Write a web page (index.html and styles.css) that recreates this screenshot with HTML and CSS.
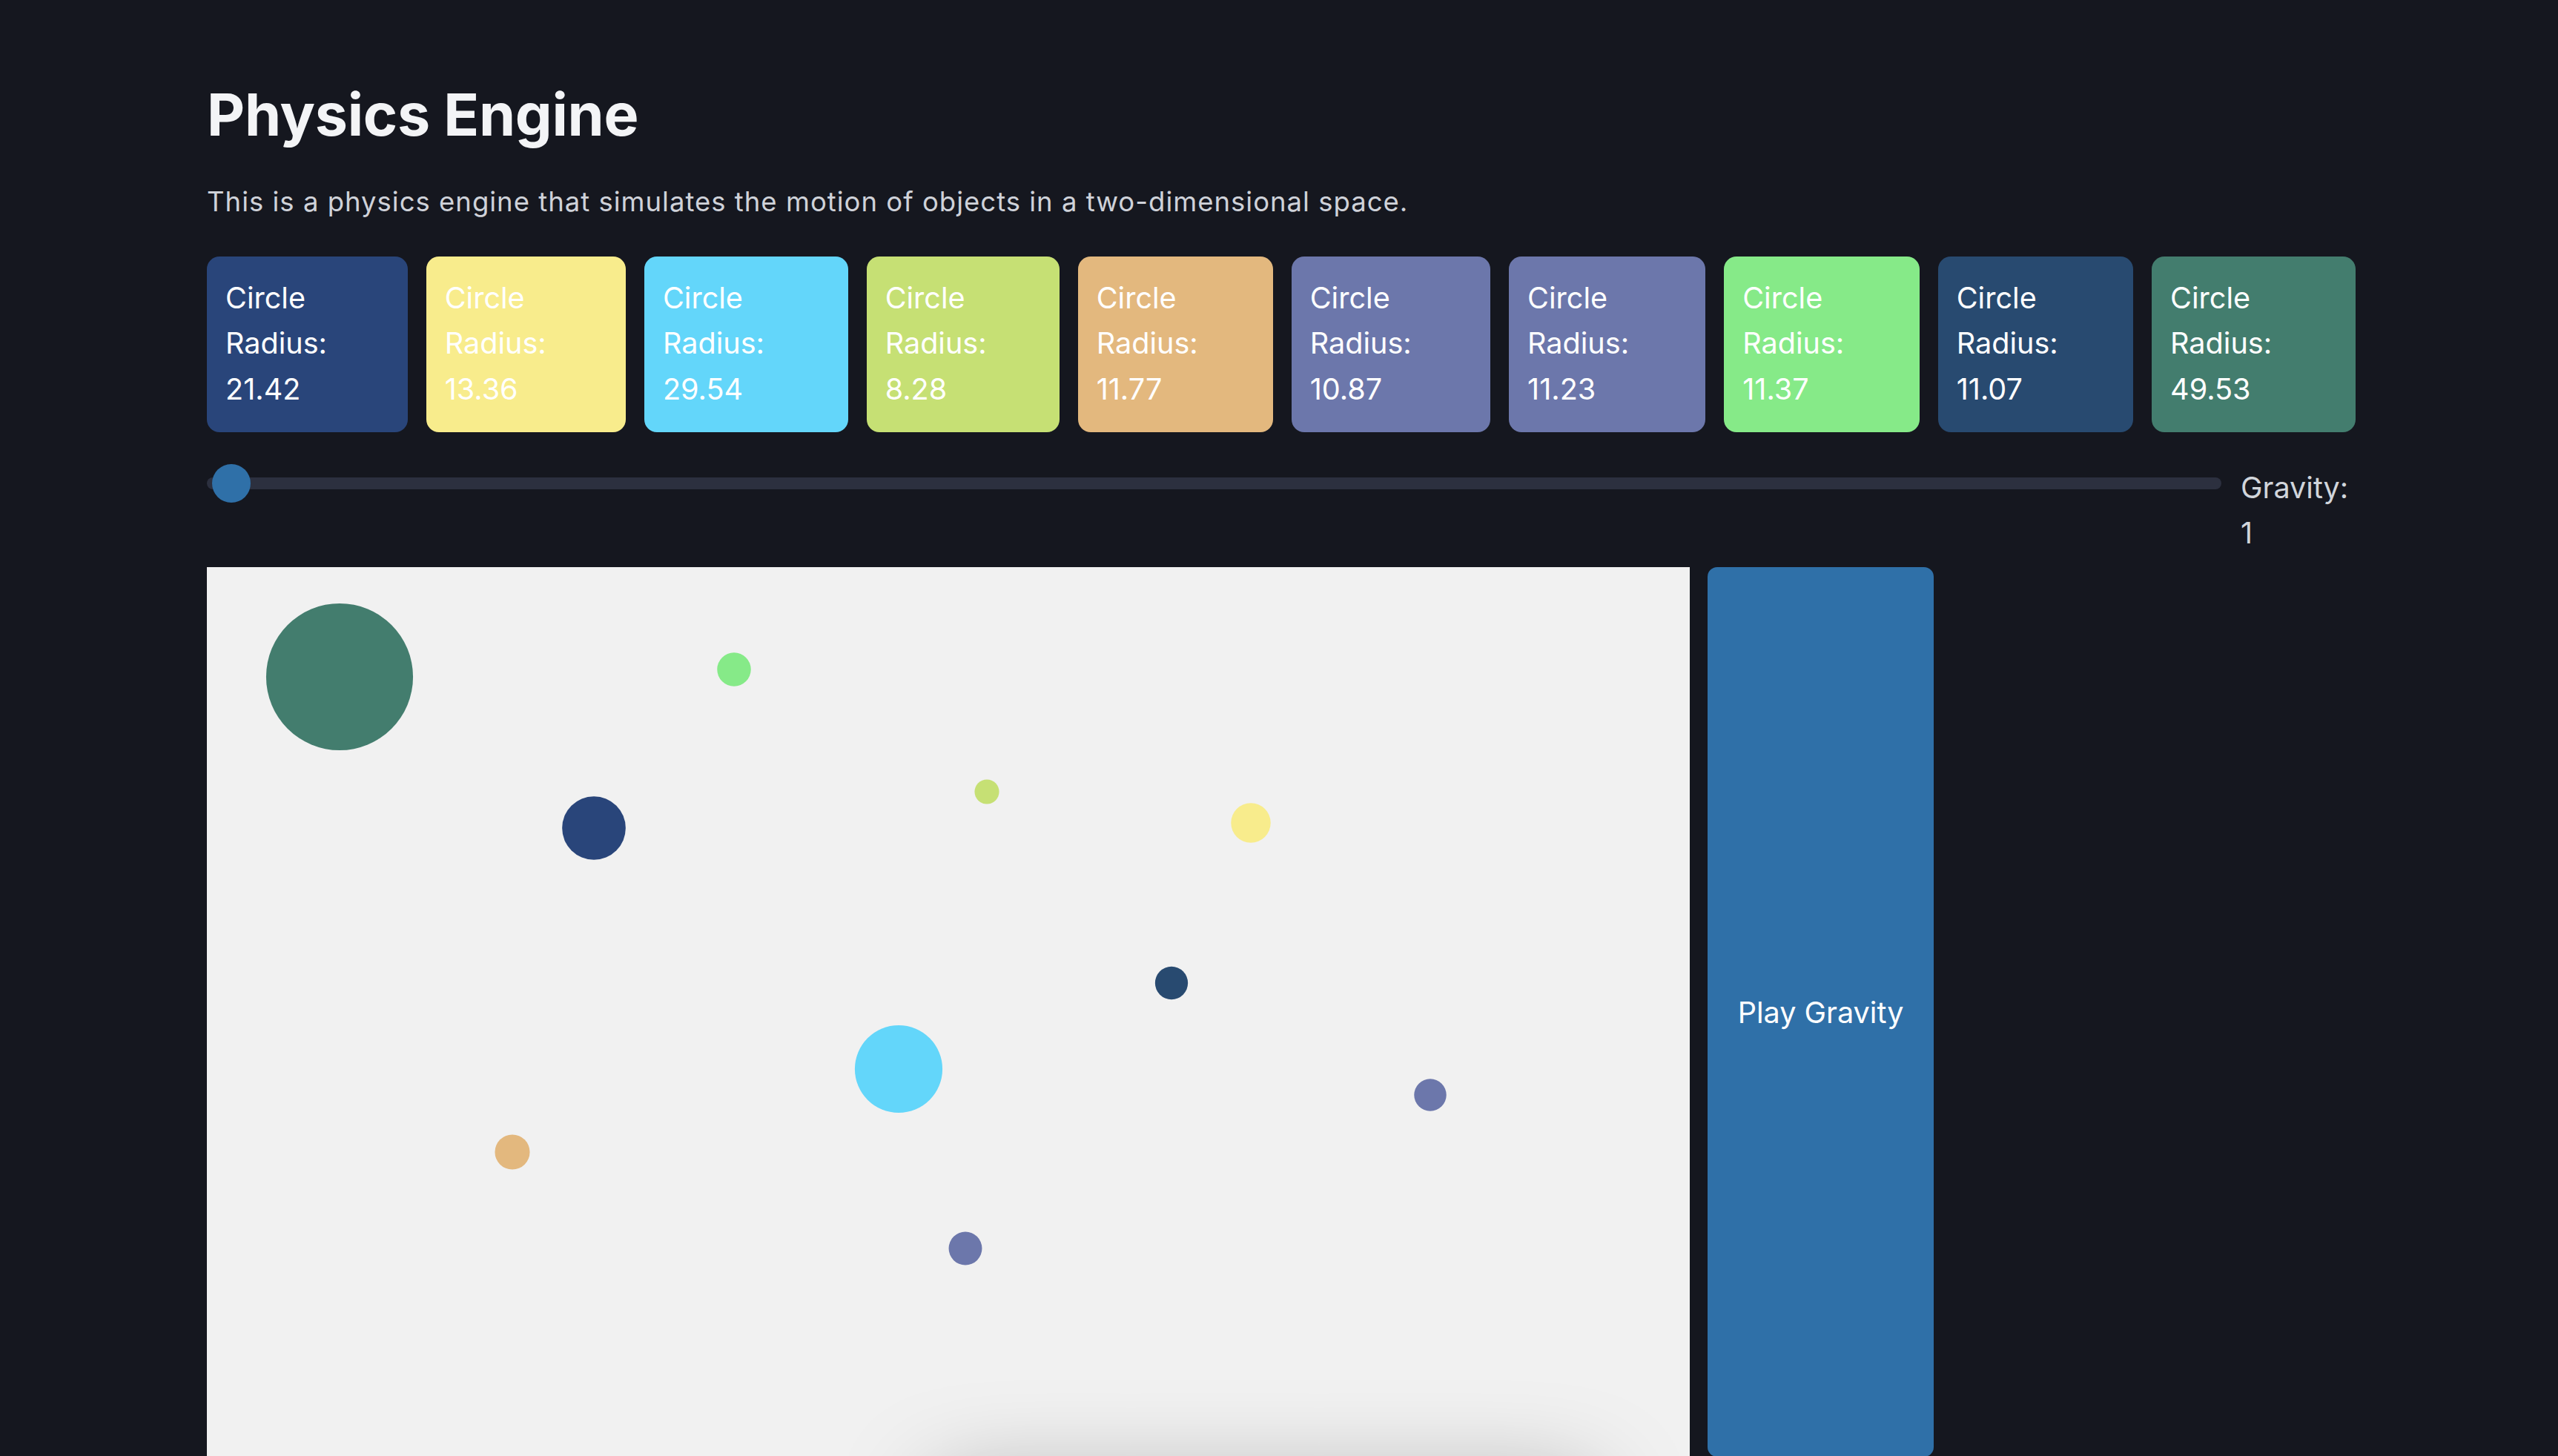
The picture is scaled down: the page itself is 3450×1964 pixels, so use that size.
FILE: index.html
```html
<!DOCTYPE html>
<html lang="en">
<head>
<meta charset="utf-8">
<title>Physics Engine</title>
<link rel="stylesheet" href="styles.css">
</head>
<body>
<main class="page">
  <h1 class="title">Physics Engine</h1>
  <p class="subtitle">This is a physics engine that simulates the motion of objects in a two-dimensional space.</p>

  <div class="cards">
    <div class="card c-navy">Circle Radius: 21.42</div>
    <div class="card c-yellow">Circle Radius: 13.36</div>
    <div class="card c-cyan">Circle Radius: 29.54</div>
    <div class="card c-lime">Circle Radius: 8.28</div>
    <div class="card c-tan">Circle Radius: 11.77</div>
    <div class="card c-slate">Circle Radius: 10.87</div>
    <div class="card c-slate">Circle Radius: 11.23</div>
    <div class="card c-green">Circle Radius: 11.37</div>
    <div class="card c-ink">Circle Radius: 11.07</div>
    <div class="card c-teal">Circle Radius: 49.53</div>
  </div>

  <div class="controls">
    <input class="slider" type="range" min="0" max="400" step="1" value="1" aria-label="Gravity">
    <span class="gravity-label">Gravity: 1</span>
  </div>

  <div class="stage">
    <svg class="canvas" viewBox="0 0 1000 600" width="2000" height="1200">
      <rect x="0" y="0" width="1000" height="600" fill="#f1f1f1"/>
      <circle cx="89.5" cy="74" r="49.53" fill="#437d6e"/>
      <circle cx="355.5" cy="69" r="11.37" fill="#86ea88"/>
      <circle cx="261" cy="176" r="21.42" fill="#29457a"/>
      <circle cx="526" cy="151.5" r="8.28" fill="#c6e074"/>
      <circle cx="704" cy="172.5" r="13.36" fill="#f8ec8c"/>
      <circle cx="650.5" cy="280.5" r="11.07" fill="#284a70"/>
      <circle cx="466.5" cy="338.5" r="29.54" fill="#63d6fa"/>
      <circle cx="825" cy="356" r="10.87" fill="#6c77ab"/>
      <circle cx="206" cy="394.5" r="11.77" fill="#e3b87e"/>
      <circle cx="511.5" cy="459.5" r="11.23" fill="#6c77ab"/>
    </svg>
    <button class="play" type="button">Play Gravity</button>
    <div class="floating-panel"></div>
  </div>
</main>
</body>
</html>
```

FILE: styles.css
```css
html, body {
  margin: 0;
  padding: 0;
  background: #15171f;
}

body {
  font-family: "Inter", "Noto Sans", "Liberation Sans", sans-serif;
  color: #f3f4f6;
  overflow: hidden;
}

.page {
  width: 2898px;
  padding: 110px 0 0 279px;
}

.title {
  margin: 0;
  font-size: 79px;
  line-height: 88px;
  font-weight: 700;
  color: #f3f4f6;
  letter-spacing: -0.3px;
}

.subtitle {
  margin: 48px 0 0;
  font-size: 36.5px;
  line-height: 52.8px;
  letter-spacing: 1px;
  color: #cfd2d9;
}

.cards {
  display: flex;
  gap: 25px;
  margin-top: 47px;
}

.card {
  padding: 26px 25px;
  border-radius: 17px;
  font-size: 39.6px;
  line-height: 61.6px;
  color: #ffffff;
  min-width: 0;
}

.c-navy { background: #29457a; }
.c-yellow { background: #f8ec8c; }
.c-cyan { background: #63d6fa; }
.c-lime { background: #c6e074; }
.c-tan { background: #e3b87e; }
.c-slate { background: #6c77ab; }
.c-green { background: #86ea88; }
.c-ink { background: #284a70; }
.c-teal { background: #437d6e; }

.controls {
  display: flex;
  align-items: flex-start;
  gap: 26px;
  margin-top: 43px;
}

.slider {
  -webkit-appearance: none;
  appearance: none;
  flex: 1 1 auto;
  min-width: 0;
  height: 52px;
  margin: 0;
  padding: 0;
  background: transparent;
}

.slider::-webkit-slider-runnable-track {
  height: 16px;
  background: #2c303f;
  border-radius: 8px;
}

.slider::-webkit-slider-thumb {
  -webkit-appearance: none;
  appearance: none;
  width: 52px;
  height: 52px;
  margin-top: -18px;
  border: none;
  border-radius: 50%;
  background: #2f70a8;
}

.gravity-label {
  flex: 0 0 155px;
  width: 155px;
  margin-top: 2px;
  font-size: 39.6px;
  line-height: 61.6px;
  color: #d1d5db;
}

.stage {
  position: relative;
  display: flex;
  align-items: stretch;
  gap: 24px;
  margin-top: 14px;
}

.canvas {
  display: block;
  flex: 0 0 2000px;
  width: 2000px;
  height: 1200px;
}

.play {
  flex: 0 0 305px;
  width: 305px;
  border: none;
  border-radius: 13px;
  background: #2f70a8;
  color: #ffffff;
  font-family: "Inter", "Noto Sans", "Liberation Sans", sans-serif;
  font-size: 39.6px;
  line-height: 61.6px;
  padding: 4px 0 0;
}

.floating-panel {
  position: absolute;
  left: 991px;
  top: 1250px;
  width: 870px;
  height: 120px;
  background: #ffffff;
  border-radius: 20px;
  box-shadow: 0 0 130px 10px rgba(0, 0, 0, 0.35);
}
```
